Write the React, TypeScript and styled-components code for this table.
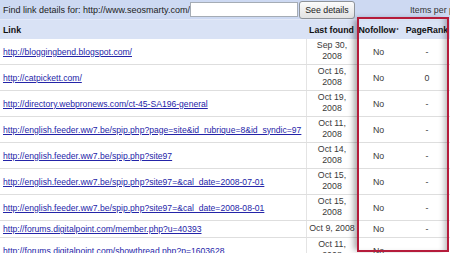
import React from "react";
import styled, { createGlobalStyle } from "styled-components";

interface LinkRow {
  url: string;
  date: string;
  nofollow: string;
  pageRank: string;
}

const rows: LinkRow[] = [
  { url: "http://bloggingbend.blogspot.com/", date: "Sep 30, 2008", nofollow: "No", pageRank: "-" },
  { url: "http://catpickett.com/", date: "Oct 16, 2008", nofollow: "No", pageRank: "0" },
  { url: "http://directory.webpronews.com/ct-45-SA196-general", date: "Oct 19, 2008", nofollow: "No", pageRank: "-" },
  {
    url: "http://english.feeder.ww7.be/spip.php?page=site&id_rubrique=8&id_syndic=97",
    date: "Oct 11, 2008",
    nofollow: "No",
    pageRank: "-",
  },
  { url: "http://english.feeder.ww7.be/spip.php?site97", date: "Oct 14, 2008", nofollow: "No", pageRank: "-" },
  {
    url: "http://english.feeder.ww7.be/spip.php?site97=&cal_date=2008-07-01",
    date: "Oct 15, 2008",
    nofollow: "No",
    pageRank: "-",
  },
  {
    url: "http://english.feeder.ww7.be/spip.php?site97=&cal_date=2008-08-01",
    date: "Oct 15, 2008",
    nofollow: "No",
    pageRank: "-",
  },
  { url: "http://forums.digitalpoint.com/member.php?u=40393", date: "Oct 9, 2008", nofollow: "No", pageRank: "-" },
  {
    url: "http://forums.digitalpoint.com/showthread.php?p=1603628",
    date: "Oct 11, 2008",
    nofollow: "No",
    pageRank: "-",
  },
];

const App: React.FC = () => {
  return (
    <Page>
      <GlobalStyle />
      <Toolbar>
        <FindLabel>Find link details for: http://www.seosmarty.com/</FindLabel>
        <SearchInput type="text" />
        <DetailsButton>See details</DetailsButton>
        <ItemsLabel>Items per page</ItemsLabel>
      </Toolbar>
      <Table>
        <HeaderRow>
          <HeadCell align="left">Link</HeadCell>
          <HeadCell>Last found</HeadCell>
          <HeadCell>
            Nofollow<Star>*</Star>
          </HeadCell>
          <HeadCell>PageRank</HeadCell>
        </HeaderRow>
        {rows.map((row) => (
          <Row key={row.url + row.date}>
            <LinkCell>
              <Url href="#">{row.url}</Url>
            </LinkCell>
            <DateCell>{row.date}</DateCell>
            <ValueCell>{row.nofollow}</ValueCell>
            <ValueCell>{row.pageRank}</ValueCell>
          </Row>
        ))}
      </Table>
      <Highlight />
    </Page>
  );
};

const GlobalStyle = createGlobalStyle`
  html, body {
    margin: 0;
    padding: 0;
    background: #fff;
    overflow: hidden;
  }
  body {
    font-family: "Liberation Sans", Arial, sans-serif;
    font-size: 8.8px;
    color: #222;
  }
`;

const Page = styled.div`
  position: relative;
  width: 450px;
  height: 253px;
  overflow: hidden;
`;

const Toolbar = styled.div`
  display: flex;
  align-items: center;
  height: 19px;
  padding-left: 3px;
  background: #cdd9f2;
  white-space: nowrap;

  & > * {
    flex-shrink: 0;
  }
`;

const FindLabel = styled.span`
  font-size: 9px;
  color: #222;
`;

const SearchInput = styled.input`
  box-sizing: border-box;
  width: 108px;
  height: 15px;
  margin: 0;
  padding: 0;
  border: 1px solid #a5acb5;
  background: #fff;
`;

const DetailsButton = styled.button`
  box-sizing: border-box;
  width: 56px;
  height: 18px;
  margin-left: 1px;
  padding: 0;
  border: 1px solid #8e9399;
  border-radius: 3px;
  background: linear-gradient(#fbfbfb, #e2e2e2);
  font-family: "Liberation Sans", Arial, sans-serif;
  font-size: 8.8px;
  color: #222;
`;

const ItemsLabel = styled.span`
  margin-left: 55px;
  color: #333;
`;

const Table = styled.div`
  width: 454px;
`;

const Row = styled.div`
  display: grid;
  grid-template-columns: 306px 51px 43px 54px;
  min-height: 16px;
  border-bottom: 1px solid #dedede;
`;

const HeaderRow = styled(Row)`
  height: 20px;
  min-height: 0;
  border-bottom: none;
  background: #d9e2f5;
  border-top: 1px solid #e3e9f8;
  box-sizing: border-box;
`;

const HeadCell = styled.div<{ align?: "left" | "center" }>`
  display: flex;
  align-items: center;
  justify-content: ${(p) => (p.align === "left" ? "flex-start" : "center")};
  padding: 0 ${(p) => (p.align === "left" ? "3px" : "0")};
  font-weight: bold;
  color: #111;
  white-space: nowrap;
`;

const Star = styled.sup`
  font-size: 5px;
  margin-left: 1px;
  vertical-align: 5px;
`;

const LinkCell = styled.div`
  display: flex;
  align-items: center;
  padding: 0 3px;
  white-space: nowrap;
  overflow: hidden;
`;

const Url = styled.a`
  font-size: 8.6px;
  color: #2424a8;
  text-decoration: underline;
`;

const DateCell = styled.div`
  display: flex;
  align-items: center;
  justify-content: center;
  padding: 1px 2px 2px;
  border-left: 1px solid #e4e4e4;
  text-align: center;
  line-height: 11px;
  color: #3a3a3a;
`;

const ValueCell = styled.div`
  display: flex;
  align-items: center;
  justify-content: center;
  color: #3a3a3a;
`;

const Highlight = styled.div`
  position: absolute;
  left: 357px;
  top: 17px;
  width: 92px;
  height: 235px;
  box-sizing: border-box;
  border: 2px solid #b51c3b;
  box-shadow: -5px 0 6px -2px rgba(0, 0, 0, 0.35),
    inset -6px 0 6px -4px rgba(0, 0, 0, 0.3);
  pointer-events: none;
`;

export default App;
